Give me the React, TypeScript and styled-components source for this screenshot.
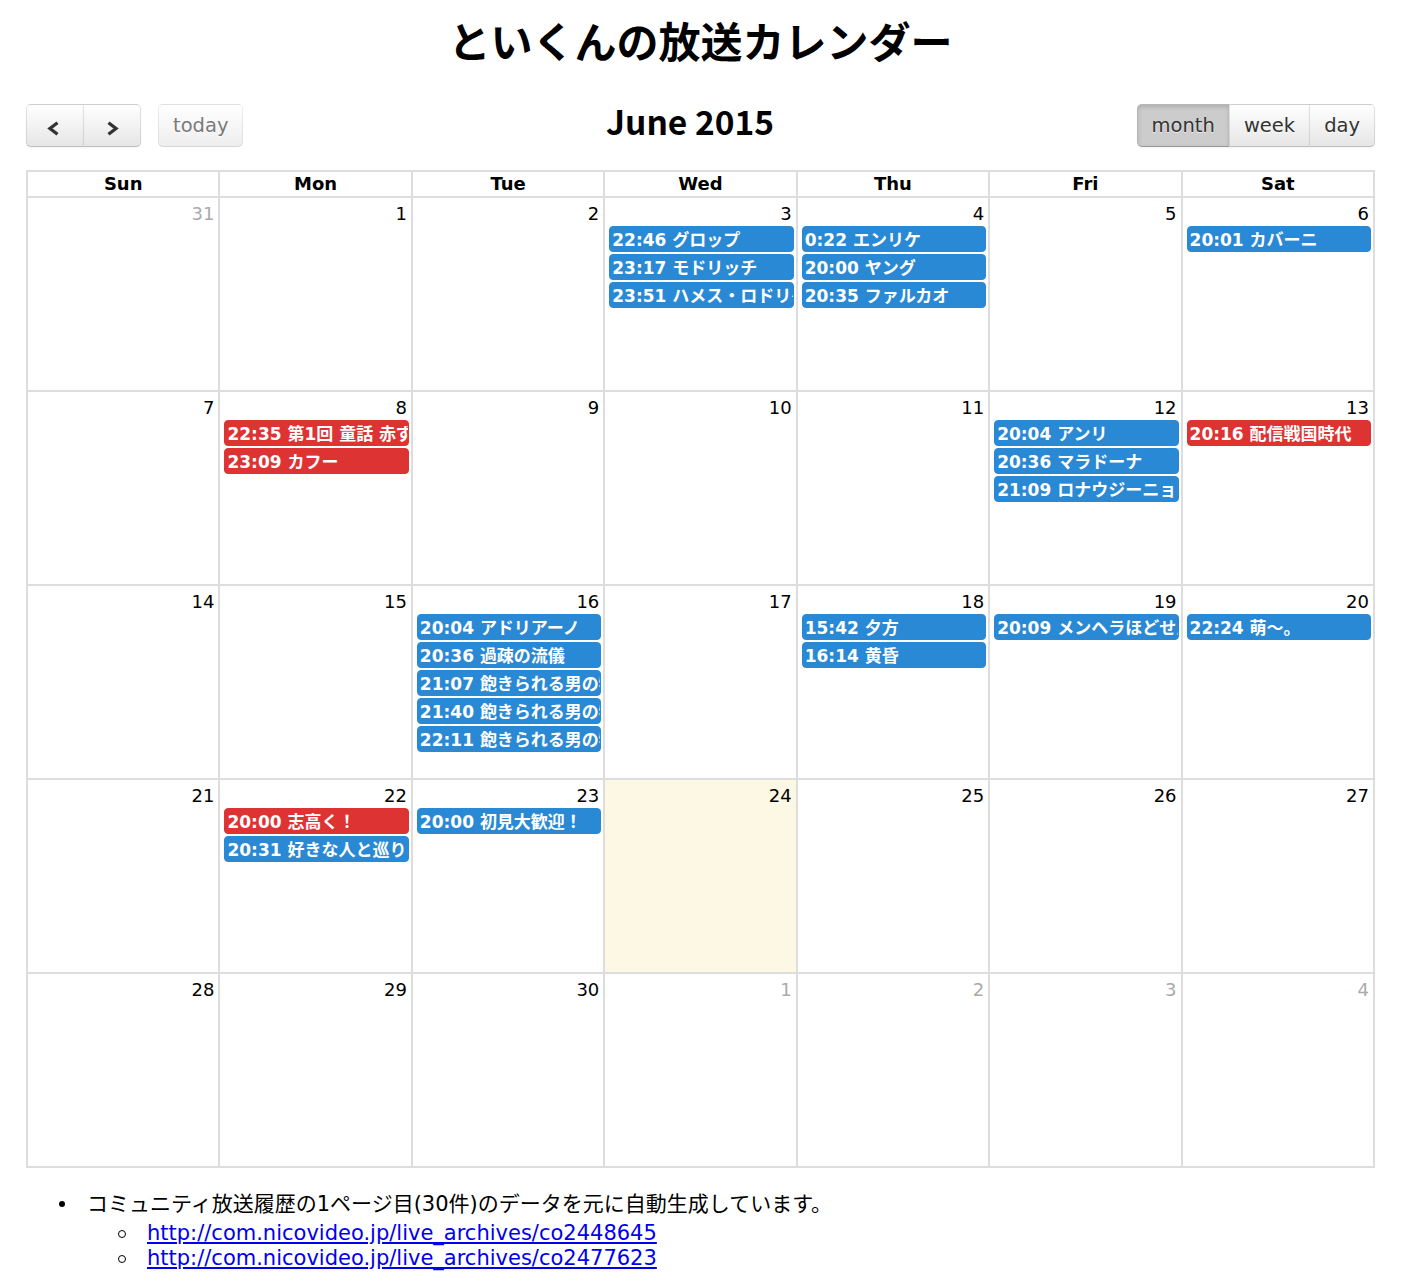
import React from 'react';
import styled, { createGlobalStyle, css } from 'styled-components';

const Global = createGlobalStyle`
  html, body { margin: 0; padding: 0; background: #fff; }
  body { font-family: "DejaVu Sans", "Noto Sans CJK JP", sans-serif; color: #000; }
`;

type Ev = { t: string; red?: boolean };
type Day = { n: number; other?: boolean; today?: boolean; events?: Ev[] };

const weeks: Day[][] = [
  [
    { n: 31, other: true },
    { n: 1 },
    { n: 2 },
    { n: 3, events: [{ t: '22:46 グロップ' }, { t: '23:17 モドリッチ' }, { t: '23:51 ハメス・ロドリゲス' }] },
    { n: 4, events: [{ t: '0:22 エンリケ' }, { t: '20:00 ヤング' }, { t: '20:35 ファルカオ' }] },
    { n: 5 },
    { n: 6, events: [{ t: '20:01 カバーニ' }] },
  ],
  [
    { n: 7 },
    { n: 8, events: [{ t: '22:35 第1回 童話 赤ずきん', red: true }, { t: '23:09 カフー', red: true }] },
    { n: 9 },
    { n: 10 },
    { n: 11 },
    { n: 12, events: [{ t: '20:04 アンリ' }, { t: '20:36 マラドーナ' }, { t: '21:09 ロナウジーニョ' }] },
    { n: 13, events: [{ t: '20:16 配信戦国時代', red: true }] },
  ],
  [
    { n: 14 },
    { n: 15 },
    {
      n: 16,
      events: [
        { t: '20:04 アドリアーノ' },
        { t: '20:36 過疎の流儀' },
        { t: '21:07 飽きられる男の物語' },
        { t: '21:40 飽きられる男の物語' },
        { t: '22:11 飽きられる男の物語' },
      ],
    },
    { n: 17 },
    { n: 18, events: [{ t: '15:42 夕方' }, { t: '16:14 黄昏' }] },
    { n: 19, events: [{ t: '20:09 メンヘラほどせん' }] },
    { n: 20, events: [{ t: '22:24 萌〜。' }] },
  ],
  [
    { n: 21 },
    { n: 22, events: [{ t: '20:00 志高く！', red: true }, { t: '20:31 好きな人と巡りあう' }] },
    { n: 23, events: [{ t: '20:00 初見大歓迎！' }] },
    { n: 24, today: true },
    { n: 25 },
    { n: 26 },
    { n: 27 },
  ],
  [
    { n: 28 },
    { n: 29 },
    { n: 30 },
    { n: 1, other: true },
    { n: 2, other: true },
    { n: 3, other: true },
    { n: 4, other: true },
  ],
];

const dayNames = ['Sun', 'Mon', 'Tue', 'Wed', 'Thu', 'Fri', 'Sat'];

const Page = styled.div`
  width: 1349px;
  margin-left: 26px;
  padding-top: 19px;
`;

const Title = styled.h1`
  margin: 0;
  text-align: center;
  font-family: "Noto Sans CJK JP", sans-serif;
  font-weight: 700;
  font-size: 42px;
  line-height: 42px;
`;

const Toolbar = styled.div`
  margin-top: 43px;
  height: 43px;
  display: flex;
  align-items: flex-start;
`;

const Side = styled.div`
  display: flex;
  gap: 17px;
`;

const Center = styled.div`
  flex: 1;
  text-align: center;
`;

const MonthTitle = styled.h2`
  margin: 0;
  font-family: "Noto Sans CJK JP", sans-serif;
  font-weight: 700;
  font-size: 33.5px;
  line-height: 33px;
`;

const Group = styled.div`
  display: flex;
`;

type Pos = 'first' | 'middle' | 'last' | 'only';

const Btn = styled.button<{ $pos?: Pos; $active?: boolean; $off?: boolean; $w?: number }>`
  height: 43px;
  box-sizing: border-box;
  margin: 0;
  padding: 0 14px;
  display: flex;
  align-items: center;
  justify-content: center;
  font-family: "DejaVu Sans", sans-serif;
  font-size: 19.5px;
  color: #333;
  border: 1px solid;
  border-color: rgba(0, 0, 0, 0.1) rgba(0, 0, 0, 0.1) rgba(0, 0, 0, 0.25);
  background-color: #f5f5f5;
  background-image: linear-gradient(to bottom, #ffffff, #e6e6e6);
  box-shadow: inset 0 1px 0 rgba(255, 255, 255, 0.2), 0 1px 2px rgba(0, 0, 0, 0.05);
  text-shadow: 0 1px 1px rgba(255, 255, 255, 0.75);
  cursor: pointer;
  ${(p) => p.$w && css`width: ${p.$w}px; padding: 0;`}
  ${(p) => {
    switch (p.$pos) {
      case 'first':
        return css`border-radius: 5px 0 0 5px;`;
      case 'middle':
        return css`border-radius: 0; margin-left: -1px;`;
      case 'last':
        return css`border-radius: 0 5px 5px 0; margin-left: -1px;`;
      default:
        return css`border-radius: 5px;`;
    }
  }}
  ${(p) =>
    p.$active &&
    css`
      background-color: #cccccc;
      background-image: none;
      box-shadow: inset 0 2px 4px rgba(0, 0, 0, 0.15), 0 1px 2px rgba(0, 0, 0, 0.05);
    `}
  ${(p) =>
    p.$off &&
    css`
      opacity: 0.65;
      box-shadow: none;
      cursor: default;
    `}
`;

const Chevron = styled.svg<{ $shift?: number }>`
  width: 13px;
  height: 15px;
  margin-top: 5px;
  margin-right: ${(p) => p.$shift ?? 0}px;
`;

const Grid = styled.div`
  margin-top: 23px;
  display: grid;
  grid-template-columns: repeat(7, 1fr);
  border-top: 2px solid #ddd;
  border-left: 2px solid #ddd;
`;

const HeadCell = styled.div`
  height: 26px;
  box-sizing: border-box;
  border-right: 2px solid #ddd;
  border-bottom: 2px solid #ddd;
  text-align: center;
  font-weight: 700;
  font-size: 18px;
  line-height: 24px;
`;

const DayCell = styled.div<{ $today?: boolean }>`
  height: 194px;
  min-width: 0;
  box-sizing: border-box;
  border-right: 2px solid #ddd;
  border-bottom: 2px solid #ddd;
  background: ${(p) => (p.$today ? '#fcf8e3' : '#fff')};
`;

const DayNum = styled.div<{ $other?: boolean }>`
  padding: 4px 4px 0 0;
  text-align: right;
  font-size: 18px;
  line-height: 24px;
  color: ${(p) => (p.$other ? '#aaa' : '#000')};
`;

const Events = styled.div`
  display: flex;
  flex-direction: column;
  gap: 2px;
  padding: 0 2px 0 4px;
`;

const Event = styled.div<{ $red?: boolean }>`
  height: 26px;
  box-sizing: border-box;
  padding: 3px 2px 0;
  border: 1px solid ${(p) => (p.$red ? '#dd3333' : '#2a89d4')};
  background: ${(p) => (p.$red ? '#dd3333' : '#2a89d4')};
  border-radius: 4px;
  color: #fff;
  font-weight: 700;
  font-size: 17px;
  line-height: 21px;
  white-space: nowrap;
  overflow: hidden;
`;

const Notes = styled.ul`
  margin: 24px 0 0;
  padding-left: 61px;
  font-family: "DejaVu Sans", "Noto Sans CJK JP", sans-serif;
  font-size: 21px;
  line-height: 25px;
  list-style: none;
`;

const NoteItem = styled.li`
  &::before {
    content: '';
    display: inline-block;
    width: 6px;
    height: 6px;
    margin: 0 22px 0 -28px;
    border-radius: 50%;
    background: #000;
    vertical-align: 4px;
  }
`;

const SubList = styled.ul`
  margin: 4px 0 0;
  padding-left: 60px;
  list-style: none;
`;

const SubItem = styled.li`
  &::before {
    content: '';
    display: inline-block;
    box-sizing: border-box;
    width: 8px;
    height: 8px;
    margin: 0 21px 0 -29px;
    border-radius: 50%;
    border: 1.6px solid #000;
    vertical-align: 2px;
  }
`;

const Link = styled.a`
  color: #0000ee;
  text-decoration: underline;
`;

const Left = ({ shift }: { shift?: number }) => (
  <Chevron viewBox="0 0 13 15" $shift={shift}>
    <polyline points="10.5,1.8 3,7.5 10.5,13.2" fill="none" stroke="#333" strokeWidth="3.3" />
  </Chevron>
);

const Right = () => (
  <Chevron viewBox="0 0 13 15">
    <polyline points="2.5,1.8 10,7.5 2.5,13.2" fill="none" stroke="#333" strokeWidth="3.3" />
  </Chevron>
);

export default function App() {
  return (
    <>
      <Global />
      <Page>
        <Title>といくんの放送カレンダー</Title>
        <Toolbar>
          <Side>
            <Group>
              <Btn $pos="first" $w={58} aria-label="prev">
                <Left shift={3} />
              </Btn>
              <Btn $pos="last" $w={58} aria-label="next">
                <Right />
              </Btn>
            </Group>
            <Btn $pos="only" $off>
              today
            </Btn>
          </Side>
          <Center>
            <MonthTitle>June 2015</MonthTitle>
          </Center>
          <Group>
            <Btn $pos="first" $active>
              month
            </Btn>
            <Btn $pos="middle">week</Btn>
            <Btn $pos="last">day</Btn>
          </Group>
        </Toolbar>
        <Grid>
          {dayNames.map((d) => (
            <HeadCell key={d}>{d}</HeadCell>
          ))}
          {weeks.map((w, wi) =>
            w.map((d, di) => (
              <DayCell key={`${wi}-${di}`} $today={d.today}>
                <DayNum $other={d.other}>{d.n}</DayNum>
                {d.events && (
                  <Events>
                    {d.events.map((e, ei) => (
                      <Event key={ei} $red={e.red}>
                        {e.t}
                      </Event>
                    ))}
                  </Events>
                )}
              </DayCell>
            ))
          )}
        </Grid>
        <Notes>
          <NoteItem>
            コミュニティ放送履歴の1ページ目(30件)のデータを元に自動生成しています。
            <SubList>
              <SubItem>
                <Link href="#">http://com.nicovideo.jp/live_archives/co2448645</Link>
              </SubItem>
              <SubItem>
                <Link href="#">http://com.nicovideo.jp/live_archives/co2477623</Link>
              </SubItem>
            </SubList>
          </NoteItem>
        </Notes>
      </Page>
    </>
  );
}
